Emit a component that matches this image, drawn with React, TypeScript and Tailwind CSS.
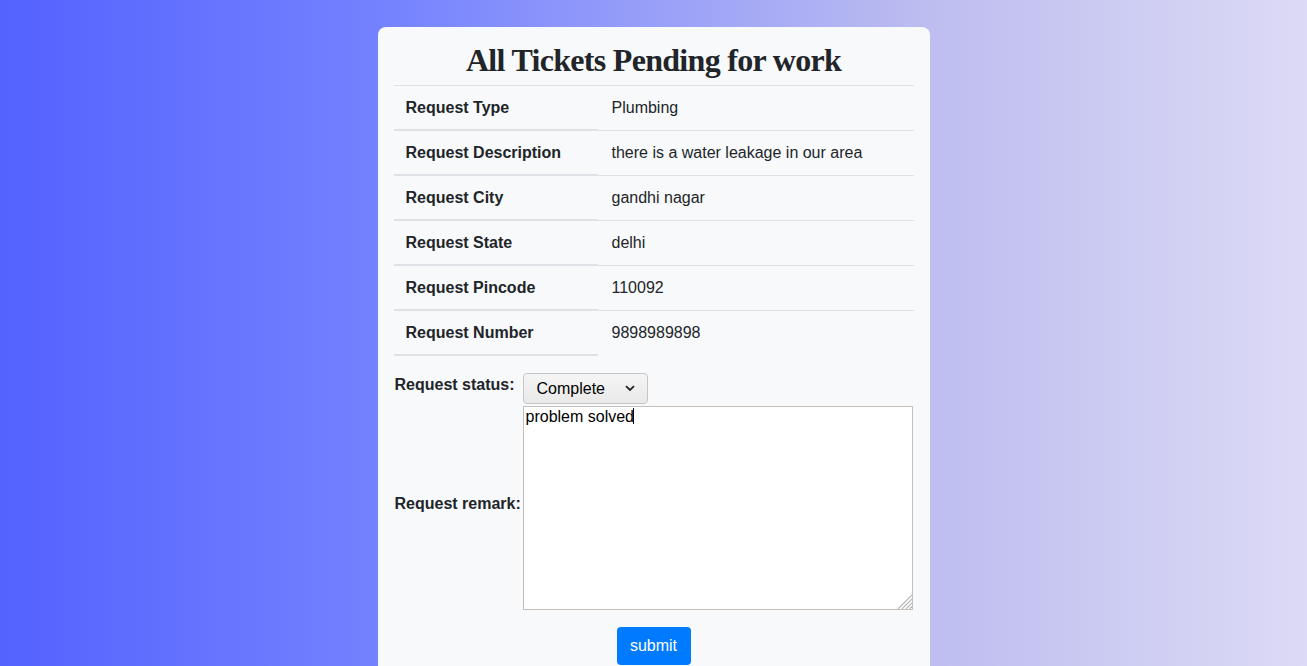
import React from "react";

const rows: [string, string][] = [
  ["Request Type", "Plumbing"],
  ["Request Description", "there is a water leakage in our area"],
  ["Request City", "gandhi nagar"],
  ["Request State", "delhi"],
  ["Request Pincode", "110092"],
  ["Request Number", "9898989898"],
];

export default function App() {
  return (
    <div className="h-[666px] w-full overflow-hidden bg-[linear-gradient(to_right,#5462ff_0%,#7583ff_30%,#bdbdf0_71%,#dcdaf5_100%)] font-['Liberation_Sans',Arial,sans-serif] text-base text-[#212529]">
      <div className="flex justify-center pt-[27px]">
        <div className="w-[552px] rounded-[8px] bg-[#f8f9fa] px-4 pb-6">
          <div className="flex h-[58px] items-center justify-center pt-[7px]">
            <h1 className="font-['Liberation_Serif','Times_New_Roman',serif] text-[32px] font-bold leading-none tracking-[-0.7px] text-[#212529]">
              All Tickets Pending for work
            </h1>
          </div>

          <div>
            {rows.map(([k, v]) => (
              <div key={k} className="flex h-[45px] border-t border-[#dee2e6]">
                <div className="flex w-[204px] items-center px-3 font-bold shadow-[inset_0_-1px_0_#dee2e6]">
                  {k}
                </div>
                <div className="flex flex-1 items-center pb-px pl-[14px]">{v}</div>
              </div>
            ))}
            <div className="h-px w-[204px] bg-[#dee2e6]" />
          </div>

          <div className="mt-[17px] grid grid-cols-[128px_390px] gap-y-[2px] pl-px">
            <div className="self-start font-bold leading-6">Request status:</div>
            <div className="relative h-[31px] w-[125px]">
              <select
                defaultValue="Complete"
                className="h-[31px] w-[125px] appearance-none rounded-[4px] border border-[#c6c6c6] bg-[linear-gradient(#f5f5f5,#e9e9e9)] pl-[13px] text-base text-black outline-none"
              >
                <option>Complete</option>
                <option>Pending</option>
              </select>
              <svg
                className="pointer-events-none absolute left-[102px] top-[12px]"
                width="10"
                height="7"
                viewBox="0 0 10 7"
              >
                <polyline points="1,1.2 5,5 9,1.2" fill="none" stroke="#222" strokeWidth="1.8" />
              </svg>
            </div>

            <div className="mb-[8px] self-center font-bold leading-6">Request remark:</div>
            <div className="relative h-[204px] w-[390px]">
              <textarea
                defaultValue="problem solved"
                className="block h-[204px] w-[390px] resize-none border border-[#c3bfbb] bg-white px-[2px] py-px text-base leading-[18px] text-black outline-none"
              />
              <span className="pointer-events-none absolute left-[110px] top-[2px] h-[16px] w-px bg-black" />
              <svg
                className="pointer-events-none absolute bottom-px right-px"
                width="15"
                height="15"
                viewBox="0 0 15 15"
              >
                <line x1="1" y1="15" x2="15" y2="1" stroke="#b8b8b8" strokeWidth="1.2" />
                <line x1="5" y1="15" x2="15" y2="5" stroke="#b8b8b8" strokeWidth="1.2" />
                <line x1="9" y1="15" x2="15" y2="9" stroke="#b8b8b8" strokeWidth="1.2" />
                <line x1="12.5" y1="15" x2="15" y2="12.5" stroke="#b8b8b8" strokeWidth="1.2" />
              </svg>
            </div>
          </div>

          <div className="mt-[17px] flex justify-center">
            <button className="h-[38px] w-[74px] rounded-[4px] bg-[#007bff] text-base text-white">
              submit
            </button>
          </div>
        </div>
      </div>
    </div>
  );
}
